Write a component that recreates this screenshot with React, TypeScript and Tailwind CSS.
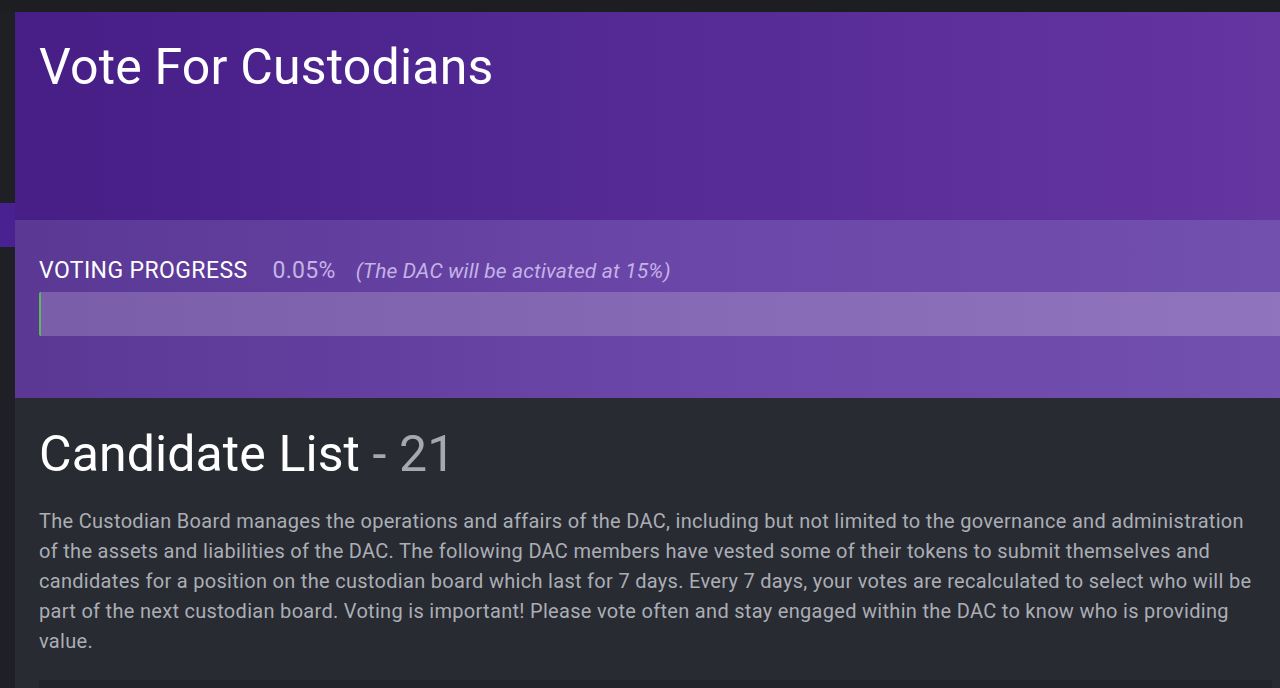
export default function App() {
  const progress = 0.05;

  return (
    <div className="min-h-screen w-full overflow-hidden bg-[#1e2025] font-['Roboto','Liberation_Sans',sans-serif]">
      {/* top strip */}
      <div className="h-3 bg-[#1c1e22]" />

      <div className="flex">
        {/* left rail */}
        <div className="w-[15px] shrink-0 bg-[#1e2025]">
          <div className="mt-[191px] h-[44px] bg-[#4a2190]" />
        </div>

        <main className="min-w-0 flex-1 bg-[#282b32]">
          {/* Header */}
          <section className="bg-gradient-to-r from-[#461e86] via-[#552a95] to-[#6535a0]">
            <div className="h-[208px] px-6 pt-[25px]">
              <h1 className="text-[50px] font-normal leading-[60px] tracking-[0.2px] text-white">Vote For Custodians</h1>
            </div>

            <div className="h-[178px] bg-gradient-to-r from-[#5a3894] via-[#6a46a8] to-[#7250ae] pl-6 pt-[37px]">
              <div className="flex items-baseline whitespace-nowrap">
                <span className="text-[23px] leading-[28px] tracking-[0.4px] text-white">VOTING PROGRESS</span>
                <span className="ml-[25px] text-[23px] leading-[28px] tracking-[0.3px] text-[#c6b3e6]">{progress}%</span>
                <span className="ml-[20px] text-[21px] italic leading-[28px] tracking-[0.15px] text-[#c5b2e6]">
                  (The DAC will be activated at 15%)
                </span>
              </div>
              <div className="mt-[7px] h-[44px] w-full overflow-hidden rounded-l-[2px] bg-gradient-to-r from-[#7a5eaa] to-[#9174be]">
                <div className="h-full bg-[#5cb85c]" style={{ width: `${Math.max(progress, 0.15)}%` }} />
              </div>
            </div>
          </section>

          {/* Candidate list */}
          <section className="pl-6 pr-[18px] pt-[26px]">
            <h2 className="text-[50px] font-normal leading-[60px] tracking-[0.1px] text-white">
              Candidate List <span className="text-[#a6a8ad]">- 21</span>
            </h2>
            <p className="mt-[22px] text-[20px] leading-[30px] tracking-[0.3px] text-[#abaeb5]">
              The Custodian Board manages the operations and affairs of the DAC, including but not limited to the
              governance and administration of the assets and liabilities of the DAC. The following DAC members have
              vested some of their tokens to submit themselves and candidates for a position on the custodian board
              which last for 7 days. Every 7 days, your votes are recalculated to select who will be part of the next
              custodian board. Voting is important! Please vote often and stay engaged within the DAC to know who is
              providing value.
            </p>
            <div className="-mr-[10px] mt-[24px] h-[60px] rounded-t-[2px] bg-[#22252b]" />
          </section>
        </main>
      </div>
    </div>
  );
}
